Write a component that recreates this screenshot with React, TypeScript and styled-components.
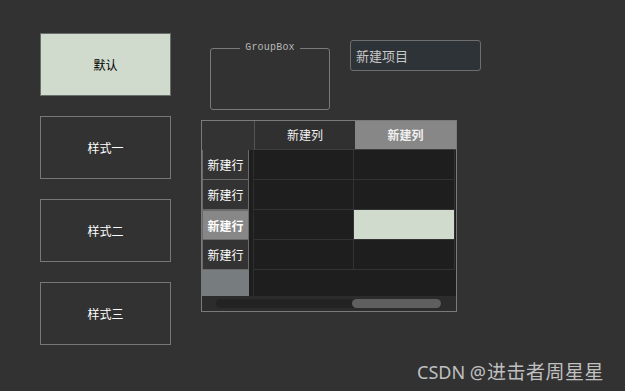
import React from 'react'
import styled, { createGlobalStyle } from 'styled-components'

const GlobalStyle = createGlobalStyle`
  html, body {
    margin: 0;
    padding: 0;
    background: #323232;
  }
  body {
    width: 625px;
    height: 391px;
    overflow: hidden;
    font-family: "Noto Sans CJK SC", "Noto Sans", sans-serif;
  }
`

const columns = ['新建列', '新建列']
const rows = ['新建行', '新建行', '新建行', '新建行']

function App(): JSX.Element {
  const activeRow = 2
  const activeCol = 1

  return (
    <Page>
      <GlobalStyle />

      <ButtonCol>
        <StyleButton primary>默认</StyleButton>
        <StyleButton>样式一</StyleButton>
        <StyleButton>样式二</StyleButton>
        <StyleButton>样式三</StyleButton>
      </ButtonCol>

      <RightCol>
        <TopRow>
          <GroupBox>
            <GroupTitle>GroupBox</GroupTitle>
          </GroupBox>
          <LineEdit>新建项目</LineEdit>
        </TopRow>

        <Table>
          <HeaderRow>
            <Corner />
            {columns.map((col, i) => (
              <ColHeader key={i} active={i === activeCol} wide={i === 1}>
                {col}
              </ColHeader>
            ))}
          </HeaderRow>

          <Body>
            <RowHeaderCol>
              {rows.map((row, i) => (
                <RowHeader key={i} active={i === activeRow}>
                  {row}
                </RowHeader>
              ))}
              <RowFiller />
            </RowHeaderCol>

            <Strip />

            <Cells>
              {rows.map((_, r) => (
                <CellRow key={r}>
                  {columns.map((__, c) => (
                    <Cell
                      key={c}
                      selected={r === activeRow && c === activeCol}
                      wide={c === 1}
                    />
                  ))}
                </CellRow>
              ))}
            </Cells>
          </Body>

          <ScrollBar>
            <Track>
              <Handle />
            </Track>
          </ScrollBar>
        </Table>
      </RightCol>

      <Watermark>
        CSDN @<WatermarkName>进击者周星星</WatermarkName>
      </Watermark>
    </Page>
  )
}

const Page = styled.div`
  position: relative;
  display: flex;
  gap: 29px;
  width: 625px;
  height: 391px;
  box-sizing: border-box;
  padding: 33px 0 0 40px;
`

const ButtonCol = styled.div`
  display: flex;
  flex-direction: column;
  gap: 20px;
`

const StyleButton = styled.div<{ primary?: boolean }>`
  display: flex;
  align-items: center;
  justify-content: center;
  width: 131px;
  height: 63px;
  box-sizing: border-box;
  border: 1px solid ${(p) => (p.primary ? '#6a6e6a' : '#777777')};
  background: ${(p) => (p.primary ? '#d0dbcd' : '#323232')};
  color: ${(p) => (p.primary ? '#000000' : '#ffffff')};
  font-size: 12px;
`

const RightCol = styled.div`
  display: flex;
  flex-direction: column;
  padding-top: 7px;
`

const TopRow = styled.div`
  display: flex;
  align-items: flex-start;
  gap: 20px;
  height: 70px;
  margin-bottom: 10px;
`

const GroupBox = styled.fieldset`
  margin: 2px 0 0 10px;
  padding: 0;
  width: 120px;
  height: 68px;
  box-sizing: border-box;
  border: 1px solid #7a7a7a;
  border-radius: 3px;
`

const GroupTitle = styled.legend`
  margin: 0 auto;
  padding: 0 5px;
  font-family: "Liberation Mono", monospace;
  font-size: 10px;
  line-height: 12px;
  letter-spacing: 0.2px;
  color: #b8b8b8;
`

const LineEdit = styled.div`
  display: flex;
  align-items: center;
  width: 131px;
  height: 31px;
  box-sizing: border-box;
  padding-left: 5px;
  border: 1px solid #6e6e6e;
  border-radius: 3px;
  background: #2e3337;
  color: #c8c8c8;
  font-size: 13px;
`

const Table = styled.div`
  display: flex;
  flex-direction: column;
  width: 256px;
  height: 192px;
  margin-left: 1px;
  box-sizing: border-box;
  border: 1px solid #7a7a7a;
  background: #1e1e1e;
`

const HeaderRow = styled.div`
  display: flex;
  height: 29px;
`

const Corner = styled.div`
  width: 52px;
  background: #333333;
  border-right: 1px solid #555555;
`

const ColHeader = styled.div<{ active?: boolean; wide?: boolean }>`
  display: flex;
  align-items: center;
  justify-content: center;
  width: ${(p) => (p.wide ? 101 : 100)}px;
  box-sizing: border-box;
  padding-bottom: 2px;
  background: ${(p) => (p.active ? '#878787' : '#303030')};
  border-bottom: 1px solid #3c3c3c;
  color: #f0f0f0;
  font-size: 12px;
  font-weight: ${(p) => (p.active ? 700 : 400)};
`

const Body = styled.div`
  display: flex;
  flex: 1;
`

const RowHeaderCol = styled.div`
  display: flex;
  flex-direction: column;
  width: 47px;
`

const RowHeader = styled.div<{ active?: boolean }>`
  display: flex;
  align-items: center;
  justify-content: center;
  height: 30px;
  box-sizing: border-box;
  border: 1px solid #6a6a6a;
  border-top-width: ${(p) => (p.active ? 1 : 0)}px;
  background: ${(p) => (p.active ? '#878787' : '#333333')};
  color: #ffffff;
  font-size: 12px;
  font-weight: ${(p) => (p.active ? 700 : 400)};
`

const RowFiller = styled.div`
  flex: 1;
  background: #777c7f;
`

const Strip = styled.div`
  width: 5px;
  border-right: 1px solid #2e2e2e;
  box-sizing: border-box;
`

const Cells = styled.div`
  display: flex;
  flex-direction: column;
`

const CellRow = styled.div`
  display: flex;
  height: 30px;
`

const Cell = styled.div<{ selected?: boolean; wide?: boolean }>`
  width: ${(p) => (p.wide ? 101 : 100)}px;
  box-sizing: border-box;
  border-right: 1px solid #333333;
  border-bottom: 1px solid #333333;
  background: ${(p) => (p.selected ? '#d0dbcd' : '#1e1e1e')};
`

const ScrollBar = styled.div`
  display: flex;
  align-items: center;
  height: 15px;
  padding: 0 15px 0 14px;
  background: #2c2c2c;
`

const Track = styled.div`
  position: relative;
  flex: 1;
  height: 9px;
  border-radius: 5px;
  background: #232323;
`

const Handle = styled.div`
  position: absolute;
  top: 0;
  right: 0;
  width: 89px;
  height: 9px;
  border-radius: 5px;
  background: #5f5f5f;
`

const Watermark = styled.div`
  position: absolute;
  left: 417px;
  top: 358px;
  font-size: 18px;
  line-height: 26px;
  color: #c0c0c0;
  font-family: "Noto Sans", "Noto Sans CJK SC", sans-serif;
`

const WatermarkName = styled.span`
  font-family: "Noto Sans CJK SC", sans-serif;
  font-size: 19px;
  letter-spacing: 0.5px;
  margin-left: 1px;
`

export default App
